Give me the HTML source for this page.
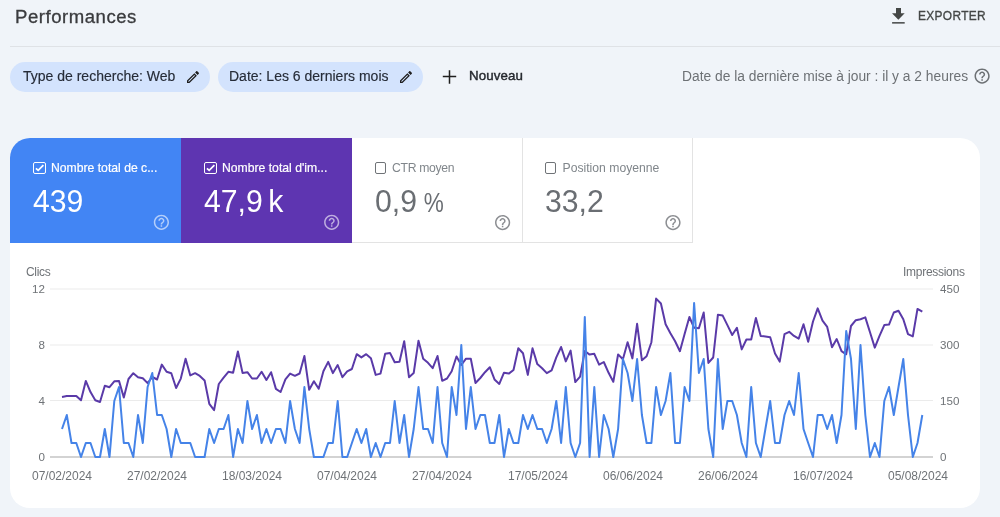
<!DOCTYPE html>
<html><head><meta charset="utf-8">
<style>
*{margin:0;padding:0;box-sizing:border-box;-webkit-font-smoothing:antialiased}
html,body{width:1000px;height:517px;overflow:hidden;background:#f0f4f9;font-family:"Liberation Sans",sans-serif;position:relative}
.abs{position:absolute;white-space:nowrap}
.title{left:15px;top:4.9px;font-size:17.6px;letter-spacing:0.5px;transform:scaleX(1.055);transform-origin:0 0;color:#3a3b3e;line-height:24px;-webkit-text-stroke:0.3px #3a3b3e}
.export{left:918px;top:8px;font-size:13.6px;color:#444746;letter-spacing:0.4px;line-height:16px;-webkit-text-stroke:0.35px #444746;transform:scaleX(0.875);transform-origin:0 0}
.divider{left:10px;top:46px;width:990px;height:1px;background:#dfe2e6}
.chip{height:30px;top:62px;border-radius:15px;background:#d3e3fd;}
.chiptext{font-size:14px;color:#262c38;line-height:16px;top:68.3px;-webkit-text-stroke:0.15px #262c38}
.upd{font-size:13.8px;color:#6d7175;line-height:16px;top:69px;left:682px}
.card{left:10px;top:138px;width:970px;height:370px;background:#fff;border-radius:20px;overflow:hidden}
.tile{top:0;height:105px;width:171px}
.tl{font-size:12.2px;line-height:14px;top:23.2px;left:41px}
.tv{font-size:31px;line-height:36px;top:46px;left:23px;transform:scaleX(0.975);transform-origin:0 0}
.cb{width:12.5px;height:12px;top:24px;left:23px;border:1.5px solid;border-radius:2px}
.ax{font-size:12px;color:#5f6368;line-height:14px}
</style></head><body><div id="root" style="position:absolute;left:0;top:0;width:1000px;height:517px;will-change:transform;background:#f0f4f9;overflow:hidden">
<div class="abs title">Performances</div>
<svg class="abs" style="left:890px;top:6px" width="18" height="20" viewBox="0 0 18 20">
 <path d="M6 2h5v5.2h3.7L8.35 13.8 2 7.2H6z" fill="#444746"/>
 <rect x="2.1" y="16.1" width="12.6" height="1.5" fill="#444746"/>
</svg>
<div class="abs export">EXPORTER</div>
<div class="abs divider"></div>

<div class="abs chip" style="left:10px;width:200px"></div>
<div class="abs chiptext" style="left:23px">Type de recherche: Web</div>
<svg class="abs" style="left:185px;top:69px" width="16" height="16" viewBox="0 0 24 24"><path d="M3 17.25V21h3.75L17.81 9.94l-3.75-3.75L3 17.25zM5.92 19H5v-.92l9.06-9.06.92.92L5.92 19zM20.71 5.63l-2.34-2.34c-.2-.2-.45-.29-.71-.29s-.51.1-.7.29l-1.83 1.83 3.75 3.75 1.83-1.83c.39-.39.39-1.02 0-1.41z" fill="#1f1f1f"/></svg>
<div class="abs chip" style="left:218px;width:205px"></div>
<div class="abs chiptext" style="left:229px">Date: Les 6 derniers mois</div>
<svg class="abs" style="left:398px;top:69px" width="16" height="16" viewBox="0 0 24 24"><path d="M3 17.25V21h3.75L17.81 9.94l-3.75-3.75L3 17.25zM5.92 19H5v-.92l9.06-9.06.92.92L5.92 19zM20.71 5.63l-2.34-2.34c-.2-.2-.45-.29-.71-.29s-.51.1-.7.29l-1.83 1.83 3.75 3.75 1.83-1.83c.39-.39.39-1.02 0-1.41z" fill="#1f1f1f"/></svg>
<svg class="abs" style="left:442px;top:69px" width="15" height="15" viewBox="0 0 15 15"><path d="M7.5 1.3v13.4M0.8 7.5h13.4" stroke="#1f1f1f" stroke-width="1.5"/></svg>
<div class="abs chiptext" style="left:469px;font-size:13.3px;-webkit-text-stroke:0.4px #1f1f1f;letter-spacing:0.1px">Nouveau</div>
<div class="abs upd">Date de la dernière mise à jour : il y a 2 heures</div>
<svg class="abs" style="left:972.8px;top:67.4px" width="18.2" height="18.2" viewBox="0 0 24 24"><path d="M11 18h2v-2h-2v2zm1-16C6.48 2 2 6.48 2 12s4.48 10 10 10 10-4.48 10-10S17.52 2 12 2zm0 18c-4.41 0-8-3.59-8-8s3.59-8 8-8 8 3.59 8 8-3.59 8-8 8zm0-14c-2.21 0-4 1.79-4 4h2c0-1.1.9-2 2-2s2 .9 2 2c0 2-3 1.75-3 5h2c0-2.25 3-2.5 3-5 0-2.21-1.79-4-4-4z" fill="#6d7175"/></svg>

<div class="abs card">
 <div class="abs tile" style="left:0;background:#4285f4;color:#fff">
  <div class="abs cb" style="border-color:#fff"></div>
  <svg class="abs" style="left:23px;top:24px" width="13" height="13" viewBox="0 0 13 13"><path d="M2.9 6.3L5.2 8.4L10.4 3.1" fill="none" stroke="#fff" stroke-width="1.7"/></svg>
  <div class="abs tl" style="-webkit-text-stroke:0.2px #fff">Nombre total de c...</div>
  <div class="abs tv">439</div>
 </div>
 <div class="abs tile" style="left:171px;background:#5e35b1;color:#fff">
  <div class="abs cb" style="border-color:#fff"></div>
  <svg class="abs" style="left:23px;top:24px" width="13" height="13" viewBox="0 0 13 13"><path d="M2.9 6.3L5.2 8.4L10.4 3.1" fill="none" stroke="#fff" stroke-width="1.7"/></svg>
  <div class="abs tl" style="-webkit-text-stroke:0.2px #fff">Nombre total d'im...</div>
  <div class="abs tv" style="word-spacing:-3px">47,9 k</div>
 </div>
 <div class="abs tile" style="left:342px;width:171px;border-right:1px solid #e3e3e3;border-bottom:1px solid #e3e3e3">
  <div class="abs cb" style="border-color:#6f7377;border-width:1.4px;left:22.5px;width:11.5px;height:11.5px"></div>
  <div class="abs tl" style="color:#80868b;letter-spacing:-0.3px;left:40px">CTR moyen</div>
  <div class="abs tv" style="color:#6a6e73">0,9<span style="display:inline-block;margin-left:7px;font-size:27.5px;transform:scaleX(0.84);transform-origin:0 0">%</span></div>
 </div>
 <div class="abs tile" style="left:512px;width:171px;border-right:1px solid #e3e3e3;border-bottom:1px solid #e3e3e3">
  <div class="abs cb" style="border-color:#6f7377;border-width:1.4px;left:22.5px;width:11.5px;height:11.5px"></div>
  <div class="abs tl" style="color:#80868b;left:40.5px">Position moyenne</div>
  <div class="abs tv" style="color:#6a6e73">33,2</div>
 </div>
</div>

<svg class="abs" style="left:0;top:0" width="1000" height="517" viewBox="0 0 1000 517">
 <path transform="translate(152.28,213.18) scale(0.76)" d="M11 18h2v-2h-2v2zm1-16C6.48 2 2 6.48 2 12s4.48 10 10 10 10-4.48 10-10S17.52 2 12 2zm0 18c-4.41 0-8-3.59-8-8s3.59-8 8-8 8 3.59 8 8-3.59 8-8 8zm0-14c-2.21 0-4 1.79-4 4h2c0-1.1.9-2 2-2s2 .9 2 2c0 2-3 1.75-3 5h2c0-2.25 3-2.5 3-5 0-2.21-1.79-4-4-4z" fill="#fff" fill-opacity="0.6"/>
 <path transform="translate(322.58,213.18) scale(0.76)" d="M11 18h2v-2h-2v2zm1-16C6.48 2 2 6.48 2 12s4.48 10 10 10 10-4.48 10-10S17.52 2 12 2zm0 18c-4.41 0-8-3.59-8-8s3.59-8 8-8 8 3.59 8 8-3.59 8-8 8zm0-14c-2.21 0-4 1.79-4 4h2c0-1.1.9-2 2-2s2 .9 2 2c0 2-3 1.75-3 5h2c0-2.25 3-2.5 3-5 0-2.21-1.79-4-4-4z" fill="#fff" fill-opacity="0.6"/>
 <path transform="translate(493.48,213.48) scale(0.76)" d="M11 18h2v-2h-2v2zm1-16C6.48 2 2 6.48 2 12s4.48 10 10 10 10-4.48 10-10S17.52 2 12 2zm0 18c-4.41 0-8-3.59-8-8s3.59-8 8-8 8 3.59 8 8-3.59 8-8 8zm0-14c-2.21 0-4 1.79-4 4h2c0-1.1.9-2 2-2s2 .9 2 2c0 2-3 1.75-3 5h2c0-2.25 3-2.5 3-5 0-2.21-1.79-4-4-4z" fill="#5f6368" fill-opacity="0.72"/>
 <path transform="translate(663.88,213.48) scale(0.76)" d="M11 18h2v-2h-2v2zm1-16C6.48 2 2 6.48 2 12s4.48 10 10 10 10-4.48 10-10S17.52 2 12 2zm0 18c-4.41 0-8-3.59-8-8s3.59-8 8-8 8 3.59 8 8-3.59 8-8 8zm0-14c-2.21 0-4 1.79-4 4h2c0-1.1.9-2 2-2s2 .9 2 2c0 2-3 1.75-3 5h2c0-2.25 3-2.5 3-5 0-2.21-1.79-4-4-4z" fill="#5f6368" fill-opacity="0.72"/>
 <g stroke="#ebebeb" stroke-width="1">
  <line x1="50" y1="289" x2="933" y2="289"/>
  <line x1="50" y1="345" x2="933" y2="345"/>
  <line x1="50" y1="400.5" x2="933" y2="400.5"/>
 </g>
 <line x1="50" y1="457" x2="933" y2="457" stroke="#c4c4c4" stroke-width="1.5"/>
 <g font-family="Liberation Sans" font-size="12" fill="#6f7377">
  <text x="26" y="276" letter-spacing="-0.3">Clics</text>
  <text x="903" y="276" letter-spacing="-0.28">Impressions</text>
  <g text-anchor="end" font-size="11.6">
   <text x="45" y="293">12</text><text x="45" y="349">8</text><text x="45" y="405">4</text><text x="45" y="461">0</text>
  </g>
  <g font-size="11.6"><text x="940" y="293">450</text><text x="940" y="349">300</text><text x="940" y="405">150</text><text x="940" y="461">0</text></g>
  <g text-anchor="middle">
   <text x="62" y="480">07/02/2024</text>
   <text x="157" y="480">27/02/2024</text>
   <text x="252" y="480">18/03/2024</text>
   <text x="347" y="480">07/04/2024</text>
   <text x="442" y="480">27/04/2024</text>
   <text x="538" y="480">17/05/2024</text>
   <text x="633" y="480">06/06/2024</text>
   <text x="728" y="480">26/06/2024</text>
   <text x="823" y="480">16/07/2024</text>
   <text x="918" y="480">05/08/2024</text>
  </g>
 </g>
 <polyline points="62.0,397.0 66.8,396.1 71.5,395.9 76.3,395.9 81.0,400.2 85.8,380.9 90.5,392.1 95.3,400.2 100.0,402.0 104.8,385.8 109.5,387.2 114.3,381.3 119.0,380.9 123.8,397.5 128.5,379.0 133.3,373.2 138.0,377.2 142.8,378.2 147.6,383.1 152.3,377.0 157.1,379.5 161.8,364.6 166.6,371.8 171.3,373.2 176.1,388.0 180.8,378.6 185.6,358.8 190.3,375.4 195.1,373.2 199.8,375.9 204.6,380.4 209.3,403.8 214.1,410.1 218.8,384.0 223.6,377.7 228.4,371.8 233.1,372.8 237.9,351.5 242.6,373.1 247.4,372.2 252.1,378.5 256.9,378.5 261.6,371.8 266.4,380.0 271.1,372.2 275.9,388.9 280.6,392.0 285.4,379.4 290.1,373.6 294.9,375.8 299.6,373.5 304.4,356.0 309.2,389.8 313.9,381.2 318.7,388.8 323.4,371.3 328.2,361.9 332.9,373.1 337.7,365.0 342.4,377.2 347.2,371.3 351.9,369.0 356.7,354.2 361.4,357.4 366.2,354.2 370.9,358.2 375.7,374.9 380.5,373.6 385.2,353.7 390.0,352.9 394.7,362.3 399.5,361.8 404.2,341.2 409.0,377.2 413.7,373.1 418.5,340.7 423.2,358.7 428.0,362.8 432.7,368.2 437.5,356.0 442.2,380.8 447.0,378.5 451.7,371.3 456.5,356.5 461.3,365.0 466.0,358.7 470.8,358.7 475.5,383.0 480.3,378.0 485.0,372.2 489.8,367.2 494.5,379.4 499.3,383.9 504.0,372.7 508.8,373.6 513.5,370.0 518.3,348.3 523.0,353.3 527.8,374.9 532.5,348.3 537.3,364.1 542.1,368.2 546.8,373.1 551.6,370.4 556.3,357.4 561.1,347.0 565.8,361.4 570.6,350.6 575.3,382.1 580.1,376.7 584.8,351.0 589.6,354.6 594.3,353.8 599.1,364.7 603.8,362.0 608.6,372.8 613.3,381.8 618.1,354.4 622.9,359.3 627.6,342.2 632.4,358.4 637.1,323.8 641.9,360.2 646.6,356.2 651.4,342.2 656.1,298.6 660.9,303.5 665.6,324.2 670.4,333.2 675.1,341.3 679.9,351.2 684.6,334.1 689.4,317.0 694.1,327.8 698.9,328.2 703.7,312.5 708.4,362.9 713.2,357.5 717.9,314.8 722.7,315.6 727.4,325.1 732.2,335.0 736.9,327.8 741.7,349.4 746.4,339.5 751.2,339.5 755.9,317.9 760.7,335.9 765.4,336.4 770.2,337.2 775.0,353.5 779.7,361.6 784.5,334.1 789.2,331.8 794.0,335.9 798.7,338.6 803.5,324.2 808.2,341.8 813.0,321.5 817.7,308.4 822.5,320.6 827.2,326.9 832.0,347.2 836.7,339.0 841.5,351.2 846.2,354.3 851.0,326.0 855.8,320.2 860.5,319.2 865.3,317.4 870.0,332.3 874.8,347.6 879.5,335.9 884.3,325.1 889.0,324.6 893.8,312.5 898.5,310.7 903.3,319.2 908.0,334.1 912.8,336.4 917.5,308.9 922.3,311.6" fill="none" stroke="#5a3aa8" stroke-width="2" stroke-linejoin="round"/>
 <polyline points="62.0,429.0 66.8,415.0 71.5,443.0 76.3,443.0 81.0,457.0 85.8,443.0 90.5,443.0 95.3,457.0 100.0,457.0 104.8,429.0 109.5,457.0 114.3,401.0 119.0,387.0 123.8,443.0 128.5,443.0 133.3,457.0 138.0,415.0 142.8,443.0 147.6,387.0 152.3,373.0 157.1,415.0 161.8,415.0 166.6,429.0 171.3,457.0 176.1,429.0 180.8,443.0 185.6,443.0 190.3,443.0 195.1,457.0 199.8,457.0 204.6,457.0 209.3,429.0 214.1,443.0 218.8,429.0 223.6,429.0 228.4,415.0 233.1,457.0 237.9,429.0 242.6,443.0 247.4,401.0 252.1,429.0 256.9,415.0 261.6,443.0 266.4,429.0 271.1,443.0 275.9,429.0 280.6,429.0 285.4,443.0 290.1,401.0 294.9,429.0 299.6,443.0 304.4,387.0 309.2,429.0 313.9,457.0 318.7,457.0 323.4,457.0 328.2,443.0 332.9,443.0 337.7,401.0 342.4,457.0 347.2,457.0 351.9,443.0 356.7,429.0 361.4,443.0 366.2,429.0 370.9,457.0 375.7,443.0 380.5,457.0 385.2,443.0 390.0,443.0 394.7,401.0 399.5,443.0 404.2,415.0 409.0,457.0 413.7,429.0 418.5,387.0 423.2,429.0 428.0,429.0 432.7,443.0 437.5,387.0 442.2,443.0 447.0,457.0 451.7,387.0 456.5,415.0 461.3,345.0 466.0,429.0 470.8,387.0 475.5,429.0 480.3,415.0 485.0,415.0 489.8,443.0 494.5,443.0 499.3,415.0 504.0,457.0 508.8,429.0 513.5,443.0 518.3,443.0 523.0,415.0 527.8,429.0 532.5,415.0 537.3,429.0 542.1,429.0 546.8,443.0 551.6,429.0 556.3,401.0 561.1,443.0 565.8,387.0 570.6,443.0 575.3,457.0 580.1,443.0 584.8,317.0 589.6,457.0 594.3,387.0 599.1,457.0 603.8,415.0 608.6,429.0 613.3,457.0 618.1,429.0 622.9,359.0 627.6,373.0 632.4,401.0 637.1,359.0 641.9,415.0 646.6,443.0 651.4,443.0 656.1,387.0 660.9,415.0 665.6,401.0 670.4,373.0 675.1,443.0 679.9,443.0 684.6,387.0 689.4,401.0 694.1,303.0 698.9,373.0 703.7,359.0 708.4,429.0 713.2,457.0 717.9,359.0 722.7,429.0 727.4,401.0 732.2,401.0 736.9,415.0 741.7,443.0 746.4,457.0 751.2,387.0 755.9,443.0 760.7,457.0 765.4,429.0 770.2,401.0 775.0,443.0 779.7,443.0 784.5,415.0 789.2,401.0 794.0,415.0 798.7,373.0 803.5,429.0 808.2,443.0 813.0,457.0 817.7,415.0 822.5,415.0 827.2,429.0 832.0,415.0 836.7,443.0 841.5,415.0 846.2,331.0 851.0,359.0 855.8,429.0 860.5,345.0 865.3,415.0 870.0,457.0 874.8,443.0 879.5,457.0 884.3,401.0 889.0,387.0 893.8,415.0 898.5,387.0 903.3,359.0 908.0,415.0 912.8,457.0 917.5,443.0 922.3,415.0" fill="none" stroke="#4583e8" stroke-width="2" stroke-linejoin="round"/>
</svg>
</div></body></html>
